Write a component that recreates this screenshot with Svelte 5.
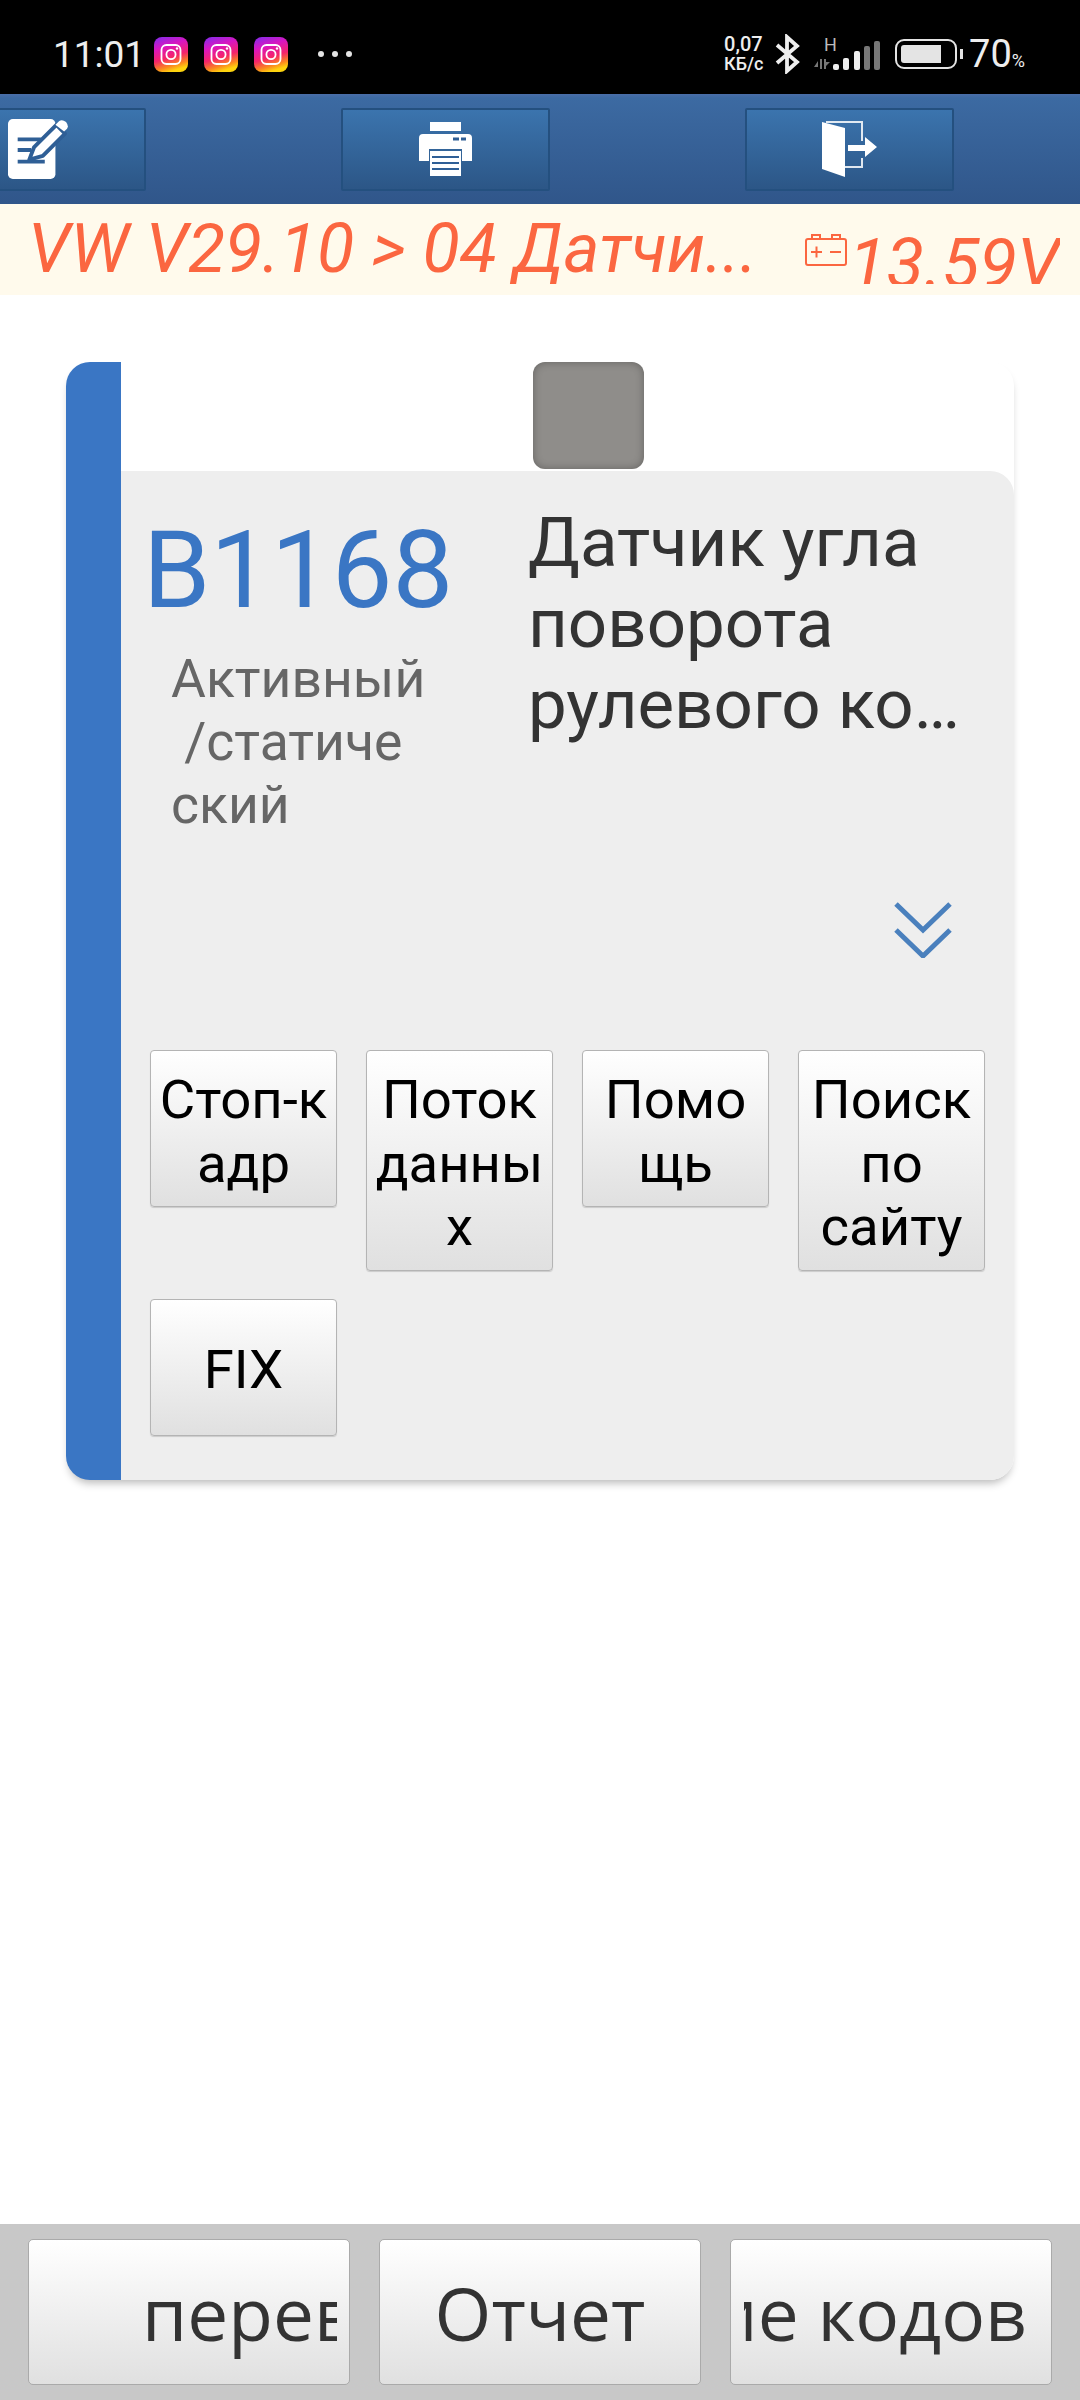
<script>
	const actions = [
		{ lines: ['Стоп-к', 'адр'] },
		{ lines: ['Поток', 'данны', 'х'] },
		{ lines: ['Помо', 'щь'] },
		{ lines: ['Поиск', 'по', 'сайту'] },
		{ lines: ['FIX'] }
	];
	// x, top of each signal bar, in the icon's own coordinates
	const bars = [
		[19, 27, '#eee'],
		[29, 21, '#eee'],
		[40, 14, '#eee'],
		[50, 9, '#777'],
		[60, 4, '#777']
	];
</script>

<div class="page">
	<header class="status">
		<span class="time">11:01</span>
		<div class="insta-row">
			{#each [0, 1, 2] as n}
				<svg class="insta" viewBox="0 0 34 35">
					<defs>
						<linearGradient id="ig{n}" x1="0.15" y1="0" x2="0.45" y2="1">
							<stop offset="0" stop-color="#8a2be8" />
							<stop offset="0.3" stop-color="#d916c0" />
							<stop offset="0.62" stop-color="#f5246a" />
							<stop offset="0.86" stop-color="#fb8a1e" />
							<stop offset="1" stop-color="#fdd30e" />
						</linearGradient>
					</defs>
					<rect width="34" height="35" rx="8" fill="url(#ig{n})" />
					<rect x="7.5" y="8" width="19" height="19" rx="5" fill="none" stroke="#fff" stroke-width="1.8" />
					<circle cx="17" cy="17.5" r="4.6" fill="none" stroke="#fff" stroke-width="1.8" />
					<circle cx="23" cy="11.5" r="1.2" fill="#fff" />
				</svg>
			{/each}
		</div>
		<div class="more"><i></i><i></i><i></i></div>
		<div class="status-right">
			<div class="speed"><span>0,07</span><span>КБ/с</span></div>
			<svg class="bt" viewBox="0 0 25 40">
				<path d="M2 11 L22 28 L12 37 V3 L22 12 L2 29" fill="none" stroke="#eee" stroke-width="3.8" />
			</svg>
			<div class="signal-wrap">
				<span class="net">H</span>
				<svg class="signal" viewBox="0 0 66 34">
					<path d="M0 30 L4 24 V32 H6 V22 H8 V32 H4 V30 Z M10 32 V22 H12 V25 H16 L12 29 V32 Z" fill="#777" />
					{#each bars as [x, top, fill]}
						<rect {x} y={top} width="6" height={33 - top} rx="2" {fill} />
					{/each}
				</svg>
			</div>
			<div class="battery">
				<div class="battery-body"><div class="battery-level"></div></div>
				<div class="battery-tip"></div>
			</div>
			<span class="percent">70<small>%</small></span>
		</div>
	</header>

	<nav class="toolbar">
		<button class="tool">
			<svg class="edit-icon" viewBox="0 0 62 62" width="60" height="60">
				<rect x="0" y="0" width="49" height="62" rx="5" fill="#fff" />
				<path d="M10 21h24M10 32h14M10 44h28" stroke="#2f5f96" stroke-width="4" fill="none" />
				<path d="M22 42 L27 29 L50 6 L59 15 L36 38 Z" fill="#fff" stroke="#2f5f96" stroke-width="4" stroke-linejoin="round" />
				<path d="M53 2 Q56 0 60 3 Q63 7 61 10 L58 13 L49 6 Z" fill="#fff" />
			</svg>
		</button>
		<button class="tool">
			<svg viewBox="0 0 54 54" width="54" height="54">
				<rect x="11" y="0" width="31" height="9" fill="#fff" />
				<path d="M0 16 Q0 12 4 12 H49 Q53 12 53 16 V39 H43 V27 H10 V39 H0 Z" fill="#fff" />
				<path d="M34 17h6M42 17h5" stroke="#2f5f96" stroke-width="3" />
				<rect x="11" y="29" width="31" height="25" fill="#fff" />
				<path d="M13 35h27M13 41h27M13 47h27" stroke="#2f5f96" stroke-width="2" />
			</svg>
		</button>
		<button class="tool">
			<svg viewBox="0 0 56 56" width="56" height="56">
				<path d="M0 1 L23 7 V56 L0 48 Z" fill="#fff" />
				<path d="M4 1 H40 V20 M40 37 V46 H23" fill="none" stroke="#fff" stroke-width="2" opacity="0.85" />
				<path d="M26 24 H43 V16 L55 26 L43 36 V30 H26 Z" fill="#fff" />
			</svg>
		</button>
	</nav>

	<div class="crumb">
		<span class="crumb-title">VW V29.10 &gt; 04 Датчи...</span>
		<svg class="car-battery" viewBox="0 0 42 32">
			<path d="M7 5V1h8v4M27 5V1h8v4" fill="none" stroke="#fb6640" stroke-width="2" />
			<rect x="1" y="5" width="40" height="26" rx="2" fill="none" stroke="#fb6640" stroke-width="2" />
			<path d="M6 18h11M11.5 12.5v11M25 18h11" stroke="#fb6640" stroke-width="2" fill="none" />
		</svg>
		<div class="voltage-clip"><span class="voltage">13.59V</span></div>
	</div>

	<main class="content">
		<article class="card">
			<div class="card-top"><div class="swatch"></div></div>
			<div class="card-body">
				<div class="info">
					<div class="info-left">
						<div class="code">B1168</div>
						<div class="kind">Активный<br />&nbsp;/статиче<br />ский</div>
					</div>
					<div class="desc">Датчик угла<br />поворота<br />рулевого ко…</div>
				</div>
				<div class="expand">
					<svg viewBox="0 0 58 56" width="58" height="56">
						<path d="M2 2 L29 28 L56 2 M2 28 L29 54 L56 28" fill="none" stroke="#4a80bd" stroke-width="5" />
					</svg>
				</div>
				<div class="actions">
					{#each actions as action}
						<button class="action">
							{#each action.lines as line}<span>{line}</span>{/each}
						</button>
					{/each}
				</div>
			</div>
		</article>
	</main>

	<footer class="bottom">
		<button class="big start"><span class="big-clip"><span>перев</span></span></button>
		<button class="big"><span class="big-clip center"><span>Отчет</span></span></button>
		<button class="big end"><span class="big-clip"><span>ие кодов</span></span></button>
	</footer>
</div>

<style>
	:global(body) {
		margin: 0;
		background: #fff;
	}

	.page {
		display: flex;
		flex-direction: column;
		width: 1080px;
		height: 2400px;
		overflow: hidden;
		font-family: Roboto, sans-serif;
	}

	button {
		font-family: inherit;
		padding: 0;
		margin: 0;
	}

	/* status bar */
	.status {
		display: flex;
		align-items: center;
		height: 94px;
		flex: none;
		background: #000;
		color: #eee;
		padding: 14px 0 0 53px;
		box-sizing: border-box;
	}

	.time {
		font-size: 37px;
		width: 101px;
	}

	.insta-row {
		display: flex;
		gap: 16px;
	}

	.insta {
		width: 34px;
		height: 35px;
		display: block;
	}

	.more {
		display: flex;
		gap: 8px;
		margin-left: 30px;
	}

	.more i {
		width: 6px;
		height: 6px;
		border-radius: 50%;
		background: #e4e4e4;
	}

	.status-right {
		display: flex;
		align-items: center;
		margin-left: auto;
		padding-right: 55px;
	}

	.speed {
		display: flex;
		flex-direction: column;
		font-size: 18px;
		font-weight: 500;
		line-height: 19px;
		width: 51px;
	}

	.speed span:first-child {
		font-size: 20px;
	}

	.bt {
		width: 25px;
		height: 40px;
		display: block;
	}

	.signal-wrap {
		display: block;
		width: 66px;
		margin-left: 14px;
		position: relative;
	}

	.signal {
		width: 66px;
		height: 34px;
		display: block;
	}

	.net {
		position: absolute;
		left: 10px;
		top: -1px;
		font-size: 18px;
		line-height: 18px;
		color: #bbb;
	}

	.battery {
		display: flex;
		align-items: center;
		margin-left: 15px;
	}

	.battery-body {
		width: 62px;
		height: 30px;
		box-sizing: border-box;
		border: 2px solid #e4e4e4;
		border-radius: 9px;
		padding: 4px;
	}

	.battery-level {
		width: 40px;
		height: 100%;
		border-radius: 3px 0 0 3px;
		background: #e4e4e4;
	}

	.battery-tip {
		width: 3px;
		height: 10px;
		margin-left: 3px;
		background: #e4e4e4;
	}

	.percent {
		font-size: 38px;
		margin-left: 6px;
	}

	.percent small {
		font-size: 18px;
	}

	/* toolbar */
	.toolbar {
		display: flex;
		align-items: center;
		gap: 195px;
		height: 110px;
		flex: none;
		box-sizing: border-box;
		background: linear-gradient(#4a6ea8 0, #3c6aa2 4px, #30568a 100%);
	}

	.tool {
		display: flex;
		align-items: center;
		justify-content: center;
		flex: none;
		width: 209px;
		height: 83px;
		border: 2px solid #24507f;
		border-radius: 2px;
		background: linear-gradient(#3b74ae, #2c5686);
	}

	.tool:first-child {
		margin-left: -63px;
	}

	.edit-icon {
		margin-right: 7px;
	}

	/* breadcrumb */
	.crumb {
		display: flex;
		height: 91px;
		flex: none;
		background: #fffaec;
		color: #fb6640;
		font-style: italic;
		padding-left: 28px;
		box-sizing: border-box;
	}

	.crumb-title {
		font-size: 68.3px;
		line-height: 91px;
		width: 777px;
		white-space: nowrap;
	}

	.car-battery {
		width: 42px;
		height: 32px;
		margin-top: 30px;
		flex: none;
	}

	.voltage-clip {
		height: 80px;
		overflow: hidden;
		margin-left: 2px;
	}

	.voltage {
		display: block;
		font-size: 69px;
		line-height: 91px;
		margin-top: 14px;
		white-space: nowrap;
	}

	/* card */
	.content {
		flex: 1;
		padding: 67px 66px 0;
		box-sizing: border-box;
	}

	.card {
		height: 1118px;
		box-sizing: border-box;
		border-left: 55px solid #3a76c4;
		border-radius: 24px;
		display: flex;
		flex-direction: column;
		background: #fff;
		box-shadow: 0 6px 8px -3px rgba(0, 0, 0, 0.28);
	}

	.card-top {
		height: 109px;
		flex: none;
		display: flex;
		justify-content: center;
		padding-left: 41px;
		box-sizing: border-box;
	}

	.swatch {
		width: 111px;
		height: 107px;
		border-radius: 12px;
		background: #8f8d8a;
		box-shadow: inset 0 0 8px rgba(0, 0, 0, 0.3);
	}

	.card-body {
		flex: 1;
		background: #eee;
		border-radius: 0 24px 24px 0;
		padding: 0 30px 0 29px;
		display: flex;
		flex-direction: column;
	}

	.info {
		display: flex;
		height: 431px;
		flex: none;
	}

	.info-left {
		width: 378px;
		flex: none;
	}

	.code {
		font-size: 108px;
		line-height: 122px;
		margin-top: 38px;
		margin-left: -7px;
		color: #3a76c4;
	}

	.kind {
		font-size: 53.5px;
		line-height: 63px;
		color: #666;
		margin-left: 21px;
		margin-top: 16px;
	}

	.desc {
		font-size: 69px;
		line-height: 81px;
		color: #333;
		margin-top: 31px;
		white-space: nowrap;
	}

	.expand {
		display: flex;
		justify-content: flex-end;
		height: 148px;
		flex: none;
		padding-right: 32px;
	}

	.actions {
		display: grid;
		grid-template-columns: repeat(4, 187px);
		column-gap: 29px;
		row-gap: 28px;
		align-items: start;
	}

	.action {
		display: flex;
		flex-direction: column;
		justify-content: center;
		align-items: center;
		min-height: 137px;
		padding: 17px 0 11px;
		box-sizing: border-box;
		font-size: 54.5px;
		line-height: 63.5px;
		color: #000;
		border: 1px solid #b4b4b4;
		border-radius: 4px;
		background: linear-gradient(#fff, #e0e0e0);
		box-shadow: 0 1px 1px rgba(0, 0, 0, 0.15);
		white-space: nowrap;
	}

	/* bottom bar */
	.bottom {
		display: flex;
		gap: 29px;
		height: 176px;
		flex: none;
		padding: 15px 28px;
		box-sizing: border-box;
		background: #c8c8c8;
	}

	.big {
		display: flex;
		flex: none;
		width: 322px;
		height: 146px;
		box-sizing: border-box;
		border: 1px solid #aaa;
		border-radius: 5px;
		background: linear-gradient(#fff, #e0e0e0);
		font-family: 'Open Sans', sans-serif;
		font-size: 73px;
		color: #333;
	}

	.big-clip {
		display: flex;
		width: 100%;
		height: 100%;
		overflow: hidden;
		align-items: center;
		white-space: nowrap;
	}

	.big-clip.center {
		justify-content: center;
	}

	.start .big-clip {
		width: 308px;
		padding-left: 113px;
		box-sizing: border-box;
	}

	.end .big-clip {
		justify-content: flex-end;
		margin-left: 13px;
		width: 283px;
	}
</style>
